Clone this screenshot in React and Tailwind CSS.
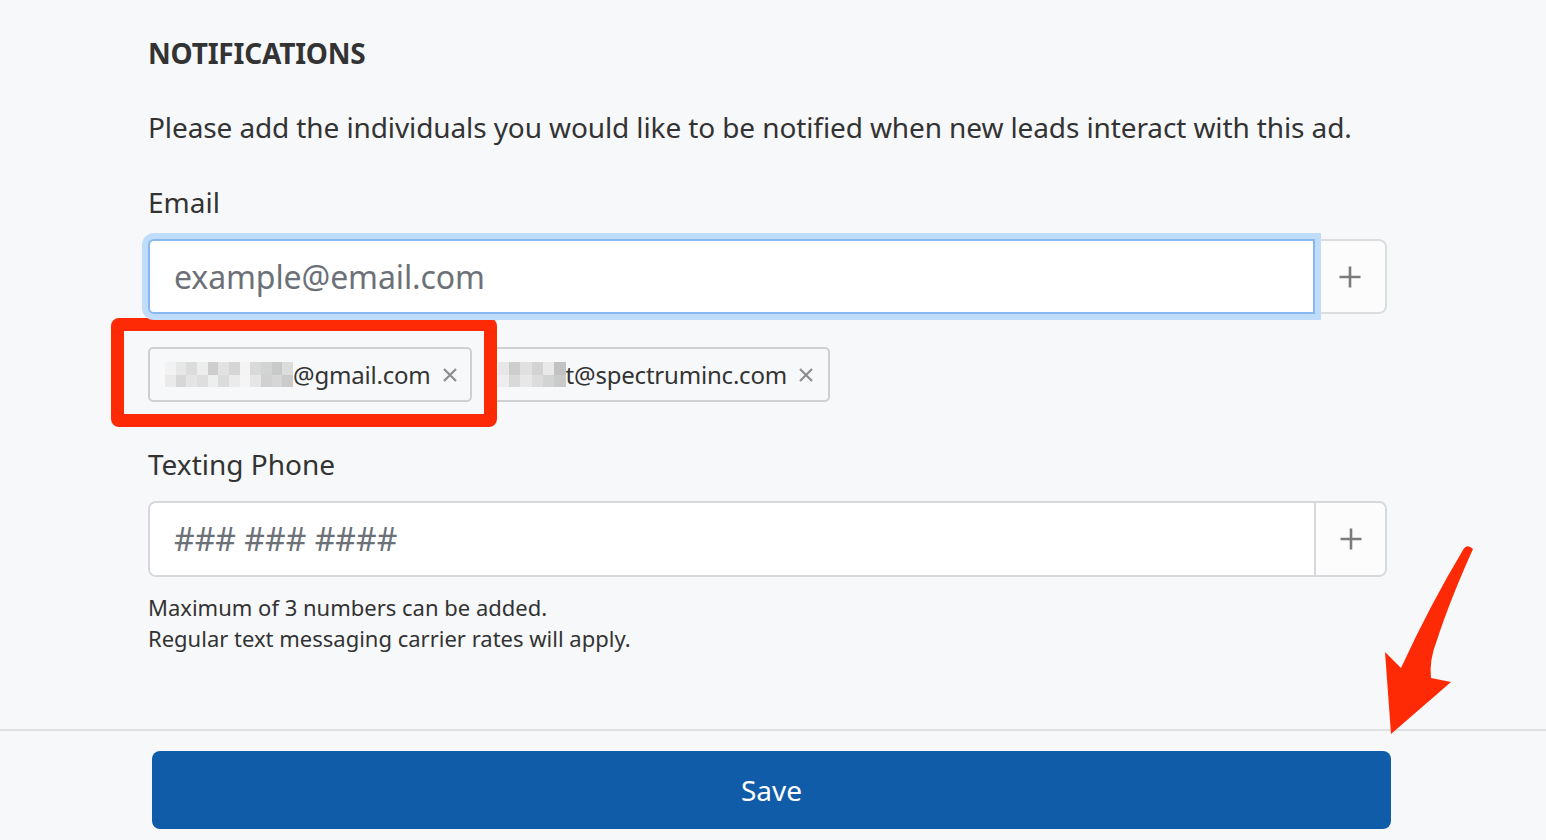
import React from "react";

const mosaic1 = [
  "bg-[#f2f2f2]", "bg-[#e6e6e6]", "bg-[#d9d9d9]", "bg-[#ececec]", "bg-[#c9c9c9]", "bg-[#e0e0e0]", "bg-[#d2d2d2]", "bg-[#f4f4f4]", "bg-[#d6d6d6]", "bg-[#cfcfcf]", "bg-[#c4c4c4]", "bg-[#dadada]",
  "bg-[#e9e9e9]", "bg-[#d4d4d4]", "bg-[#e2e2e2]", "bg-[#dcdcdc]", "bg-[#ededed]", "bg-[#d8d8d8]", "bg-[#eaeaea]", "bg-[#f5f5f5]", "bg-[#e4e4e4]", "bg-[#cdcdcd]", "bg-[#d3d3d3]", "bg-[#c7c7c7]",
];
const mosaic2 = [
  "bg-[#e6e6e6]", "bg-[#c9c9c9]", "bg-[#dedede]", "bg-[#d0d0d0]", "bg-[#e8e8e8]", "bg-[#bdbdbd]",
  "bg-[#ececec]", "bg-[#d6d6d6]", "bg-[#e6e6e6]", "bg-[#dadada]", "bg-[#cfcfcf]", "bg-[#c6c6c6]",
];

function Plus() {
  return (
    <svg width="24" height="24" viewBox="0 0 24 24" className="text-[#7b7b7b]">
      <path d="M12 1.5V22.5M1.5 12H22.5" stroke="currentColor" strokeWidth="2.6" fill="none" />
    </svg>
  );
}

function Cross() {
  return (
    <svg width="16" height="16" viewBox="0 0 16 16" className="text-[#8c8c8c] shrink-0">
      <path d="M2 2L14 14M14 2L2 14" stroke="currentColor" strokeWidth="2.2" fill="none" />
    </svg>
  );
}

function Tag({ blocks, cols, text, pad }) {
  return (
    <div className={"h-[55px] border-2 border-[#cfd0d2] rounded-[5px] flex items-center gap-[11px] " + pad}>
      <div className="flex items-center">
        <div
          className={cols === 12 ? "grid grid-cols-12 w-[128px] h-[25px] opacity-90" : "grid grid-cols-6 w-[68px] h-[25px] opacity-90"}
        >
          {blocks.map((c, i) => (
            <div key={i} className={c} />
          ))}
        </div>
        <span className="text-[24px] leading-[32px] tracking-[-0.2px] text-[#333]">{text}</span>
      </div>
      <Cross />
    </div>
  );
}

export default function App() {
  return (
    <div className="relative min-h-screen bg-[#f7f8fa] text-[#333] font-['Noto_Sans',sans-serif] overflow-hidden">
      <div className="pl-[148px] pr-[159px] pt-[34px]">
        <h2 className="text-[28px] leading-[38px] font-bold tracking-[-0.2px]">NOTIFICATIONS</h2>
        <p className="mt-[36px] text-[28px] leading-[38px] tracking-[-0.11px]">
          Please add the individuals you would like to be notified when new leads interact with this ad.
        </p>
        <div className="mt-[37px] text-[28px] leading-[38px]">Email</div>
        <div className="mt-[18px] flex h-[75px]">
          <div className="relative z-10 flex-1 flex items-center bg-white border-2 border-[#88b8ee] rounded-l-[6px] shadow-[0_0_0_6px_#bfdcfb] pl-[24px]">
            <span className="text-[32px] text-[#6c7178] tracking-[-0.1px]">example@email.com</span>
          </div>
          <div className="w-[72px] flex items-center justify-center bg-[#fcfcfd] border-2 border-l-0 border-[#dcdddf] rounded-r-[8px]">
            <Plus />
          </div>
        </div>
        <div className="mt-[33px] flex gap-[14px]">
          <Tag blocks={mosaic1} cols={12} text="@gmail.com" pad="pl-[15px] pr-[12px]" />
          <Tag blocks={mosaic2} cols={6} text="t@spectruminc.com" pad="pl-[10px] pr-[14px]" />
        </div>
        <div className="mt-[43px] text-[28px] leading-[38px]">Texting Phone</div>
        <div className="mt-[18px] flex h-[76px] border-2 border-[#d6d8db] rounded-[8px] overflow-hidden">
          <div className="flex-1 flex items-center bg-white pl-[24px]">
            <span className="text-[32px] text-[#6c7178]">### ### ####</span>
          </div>
          <div className="w-[71px] flex items-center justify-center bg-[#fcfcfd] border-l-2 border-[#d6d8db]">
            <Plus />
          </div>
        </div>
        <div className="mt-[15px] text-[22px] leading-[31px] text-[#333]">
          <div>Maximum of 3 numbers can be added.</div>
          <div>Regular text messaging carrier rates will apply.</div>
        </div>
      </div>
      <div className="mt-[75px] border-t-2 border-[#dfe0e2] pt-[20px] pl-[152px] pr-[155px]">
        <button className="w-full h-[78px] bg-[#105ca8] rounded-[8px] text-white text-[28px] leading-[38px]">
          Save
        </button>
      </div>

      <div className="absolute left-[111px] top-[318px] w-[386px] h-[109px] border-[13px] border-[#fe2a05] rounded-[8px] pointer-events-none" />

      <svg className="absolute left-0 top-0 pointer-events-none" width="1546" height="840" viewBox="0 0 1546 840">
        <path
          d="M1463 550 Q1467 543 1473 549 Q1450 600 1437 640 Q1429 660 1431 678 L1451 682 L1391 734 L1385 652 L1401 668 Q1430 605 1463 550 Z"
          fill="#fe2a05"
        />
      </svg>
    </div>
  );
}
